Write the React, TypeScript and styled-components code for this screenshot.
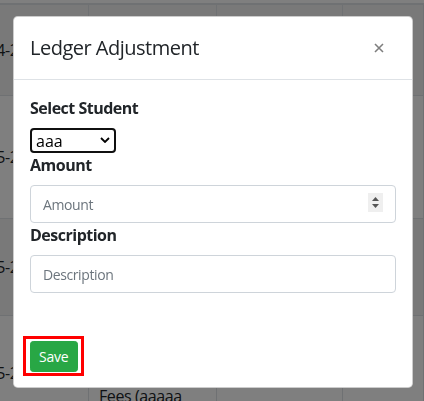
import React from "react";
import styled, { createGlobalStyle } from "styled-components";

const GlobalStyle = createGlobalStyle`
  html, body { margin: 0; padding: 0; background: #fff; overflow: hidden; }
  body { font-family: "Open Sans", "Noto Sans", sans-serif; color: #212529; }
  * { box-sizing: border-box; }
`;

const Page = styled.div`
  width: 424px;
  height: 401px;
  overflow: hidden;
`;

const TopStrip = styled.div`
  height: 4px;
  border-bottom: 1px solid #dee2e6;
`;

const Row = styled.div<{ $h: number; $striped?: boolean }>`
  display: grid;
  grid-template-columns: 89px 128px 126px 1fr;
  height: ${(p) => p.$h}px;
  background: ${(p) => (p.$striped ? "#f2f2f2" : "#fff")};
  border-top: 1px solid #dee2e6;
`;

const Cell = styled.div<{ $top?: number }>`
  display: flex;
  align-items: ${(p) => (p.$top !== undefined ? "flex-start" : "center")};
  padding: ${(p) => (p.$top !== undefined ? `${p.$top}px 10px 0` : "0 10px")};
  border-right: 1px solid #dee2e6;
  font-size: 16px;
  line-height: 24px;
  letter-spacing: -0.4px;
  white-space: nowrap;
  overflow: hidden;
`;

const DateText = styled.span`
  margin-left: -40px;
`;

const Overlay = styled.div`
  position: fixed;
  inset: 0;
  background: rgba(0, 0, 0, 0.5);
  display: flex;
  align-items: flex-start;
  padding: 16px 0 0 13px;
`;

const Dialog = styled.div`
  width: 400px;
  background: #fff;
  border: 1px solid rgba(0, 0, 0, 0.2);
  border-radius: 4.8px;
  display: flex;
  flex-direction: column;
`;

const Header = styled.div`
  display: flex;
  align-items: center;
  padding: 16px;
  border-bottom: 1px solid #dee2e6;
`;

const Title = styled.h5`
  margin: 0;
  font-size: 20px;
  line-height: 30px;
  font-weight: 400;
  letter-spacing: -0.5px;
  color: #212529;
`;

const Close = styled.button`
  margin-left: auto;
  margin-right: 7px;
  width: 20px;
  height: 20px;
  padding: 0;
  border: 0;
  background: transparent;
  display: flex;
  align-items: center;
  justify-content: center;
  opacity: 0.5;
`;

const Body = styled.div`
  padding: 16px;
  display: flex;
  flex-direction: column;
`;

const Label = styled.label`
  display: block;
  font-size: 16px;
  line-height: 24px;
  font-weight: 700;
  letter-spacing: -0.5px;
  color: #212529;
  margin-bottom: 8px;
`;

const SelectWrap = styled.div`
  position: relative;
  width: 86px;
  height: 25px;
`;

const Select = styled.select`
  appearance: none;
  width: 100%;
  height: 100%;
  border: 2px solid #101010;
  border-radius: 4px;
  background: #fff;
  padding: 0 0 0 4px;
  font-family: inherit;
  font-size: 16px;
  color: #000;
  outline: none;
`;

const Chevron = styled.svg`
  position: absolute;
  right: 6px;
  top: 9px;
  pointer-events: none;
`;

const InputWrap = styled.div`
  position: relative;
  width: 100%;
`;

const Input = styled.input`
  display: block;
  width: 100%;
  height: 38px;
  padding: 6px 12px;
  border: 1px solid #ced4da;
  border-radius: 4px;
  font-family: inherit;
  font-size: 14px;
  letter-spacing: -0.4px;
  color: #495057;
  background: #fff;
  &::placeholder { color: #6c757d; opacity: 1; }
`;

const Spinner = styled.div`
  position: absolute;
  right: 13px;
  top: 8px;
  width: 15px;
  height: 19px;
  background: #efefef;
  display: flex;
  align-items: center;
  justify-content: center;
`;

const Footer = styled.div`
  display: flex;
  padding: 27px 16px 11px 9px;
`;

const Highlight = styled.div`
  display: inline-flex;
  border: 3px solid #ff0000;
  padding: 2px 3px 1px 4px;
`;

const SaveButton = styled.button`
  height: 31px;
  padding: 0 8px;
  border: 1px solid #28a745;
  border-radius: 3.2px;
  background: #28a745;
  color: #fff;
  font-family: inherit;
  font-size: 14px;
  line-height: 21px;
  letter-spacing: -0.2px;
`;

export default function App() {
  return (
    <>
      <GlobalStyle />
      <Page>
        <TopStrip />
        <Row $h={91} $striped>
          <Cell><DateText>2024-25</DateText></Cell>
          <Cell />
          <Cell />
          <Cell />
        </Row>
        <Row $h={123}>
          <Cell><DateText>2025-26</DateText></Cell>
          <Cell />
          <Cell />
          <Cell />
        </Row>
        <Row $h={97} $striped>
          <Cell><DateText>2025-26</DateText></Cell>
          <Cell />
          <Cell />
          <Cell />
        </Row>
        <Row $h={114}>
          <Cell><DateText>2025-26</DateText></Cell>
          <Cell $top={68}>Fees (aaaaa</Cell>
          <Cell />
          <Cell />
        </Row>
      </Page>
      <Overlay>
        <Dialog>
          <Header>
            <Title>Ledger Adjustment</Title>
            <Close aria-label="Close">
              <svg width="10" height="10" viewBox="0 0 10 10">
                <path d="M1 1 L9 9 M9 1 L1 9" stroke="#000" strokeWidth="1.6" />
              </svg>
            </Close>
          </Header>
          <Body>
            <Label>Select Student</Label>
            <SelectWrap>
              <Select defaultValue="aaa">
                <option value="aaa">aaa</option>
              </Select>
              <Chevron width="10" height="6" viewBox="0 0 10 6">
                <path d="M1 1 L5 5 L9 1" stroke="#000" strokeWidth="1.8" fill="none" />
              </Chevron>
            </SelectWrap>
            <Label>Amount</Label>
            <InputWrap>
              <Input type="text" placeholder="Amount" />
              <Spinner>
                <svg width="9" height="13" viewBox="0 0 9 13">
                  <path d="M4.5 1 L8 5 L1 5 Z" fill="#555" />
                  <path d="M1 8 L8 8 L4.5 12 Z" fill="#555" />
                </svg>
              </Spinner>
            </InputWrap>
            <Label>Description</Label>
            <Input type="text" placeholder="Description" />
          </Body>
          <Footer>
            <Highlight>
              <SaveButton>Save</SaveButton>
            </Highlight>
          </Footer>
        </Dialog>
      </Overlay>
    </>
  );
}
